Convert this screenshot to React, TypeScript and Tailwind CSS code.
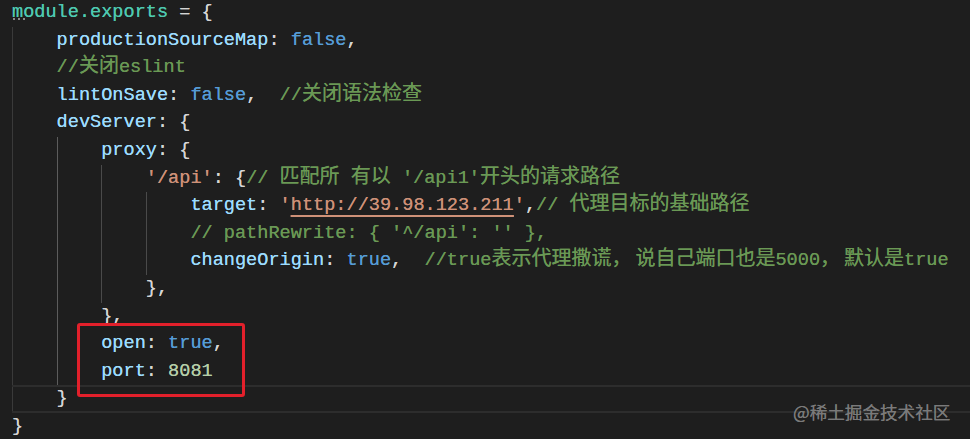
import React from "react";

type Tok = [string, string] | [string, string, string];

const P = "text-[#d4d4d4]";
const PR = "text-[#9cdcfe]";
const KW = "text-[#569cd6]";
const CM = "text-[#6a9955]";
const ST = "text-[#ce9178]";
const NU = "text-[#b5cea8]";
const TE = "text-[#4ec9b0]";

const lines: { level: number; toks: Tok[]; active?: boolean }[] = [
  { level: 0, toks: [["module.exports", TE], [" = {", P]] },
  { level: 1, toks: [["productionSourceMap", PR], [": ", P], ["false", KW], [",", P]] },
  { level: 1, toks: [["//关闭eslint", CM]] },
  { level: 1, toks: [["lintOnSave", PR], [": ", P], ["false", KW], [",  ", P], ["//关闭语法检查", CM]] },
  { level: 1, toks: [["devServer", PR], [": {", P]] },
  { level: 2, toks: [["proxy", PR], [": {", P]] },
  { level: 3, toks: [["'/api'", ST], [": {", P], ["// 匹配所 有以 '/api1'开头的请求路径", CM]] },
  {
    level: 4,
    toks: [
      ["target", PR],
      [": ", P],
      ["'", ST],
      ["http://39.98.123.211", ST, "underline decoration-2 decoration-[#ce9178] underline-offset-[5px]"],
      ["'", ST],
      [",", P],
      ["// 代理目标的基础路径", CM],
    ],
  },
  { level: 4, toks: [["// pathRewrite: { '^/api': '' },", CM]] },
  {
    level: 4,
    toks: [
      ["changeOrigin", PR],
      [": ", P],
      ["true", KW],
      [",  ", P],
      ["//true表示代理撒谎，说自己端口也是5000，默认是true", CM],
    ],
  },
  { level: 3, toks: [["},", P]] },
  { level: 2, toks: [["},", P]] },
  { level: 2, toks: [["open", PR], [": ", P], ["true", KW], [",", P]] },
  { level: 2, toks: [["port", PR], [": ", P], ["8081", NU]] },
  { level: 1, toks: [["}", P]], active: true },
  { level: 0, toks: [["}", P]] },
];

function renderCjk(s: string, key: number) {
  const bits = s.split(/(，)/);
  return (
    <span key={key} className="text-[20px] leading-[20px] font-['Noto_Sans_CJK_SC',sans-serif]">
      {bits.map((b, j) =>
        b === "，" ? (
          <span key={j} className="pr-[4px]">
            {b}
          </span>
        ) : (
          <React.Fragment key={j}>{b}</React.Fragment>
        )
      )}
    </span>
  );
}

function renderText(t: string) {
  const parts = t.split(/([\u3000-\u303f\u4e00-\u9fff\uff00-\uffef]+)/);
  return parts.map((s, i) =>
    i % 2 === 1 ? renderCjk(s, i) : <React.Fragment key={i}>{s}</React.Fragment>
  );
}

export default function App() {
  return (
    <div className="relative w-[970px] h-[439px] overflow-hidden bg-[#1e1e1e] font-['Liberation_Mono','Noto_Sans_CJK_SC',monospace] text-[18.58px] [text-shadow:0_0_0.4px_currentColor]">
      <div className="flex flex-col pl-[12px] -mt-px">
        {lines.map((ln, idx) => (
          <div
            key={idx}
            className={
              "flex h-[27.6px] shrink-0 " +
              (ln.active ? "border-y-2 border-[#2d2d2d]" : "")
            }
          >
            {Array.from({ length: ln.level }).map((_, k) => (
              <span
                key={k}
                className={
                  "w-[44.6px] shrink-0 border-l " +
                  (k === 0 ? "border-[#3a3a3a]" : k === 1 ? "border-[#5c5c5c]" : "border-[#4a4a4a]")
                }
              />
            ))}
            <span className={"whitespace-pre leading-[27.6px] " + (ln.active ? "-mt-[2px]" : "")}>
              {ln.toks.map((t, i) => (
                <span key={i} className={t[1] + (t[2] ? " " + t[2] : "")}>
                  {renderText(t[0])}
                </span>
              ))}
            </span>
          </div>
        ))}
      </div>

      {/* suggestion dots */}
      <div className="absolute left-[13px] top-[18px] flex gap-[3px]">
        <span className="w-[2px] h-[2px] bg-[#8a8a8a]" />
        <span className="w-[2px] h-[2px] bg-[#8a8a8a]" />
        <span className="w-[2px] h-[2px] bg-[#8a8a8a]" />
      </div>

      {/* red highlight box */}
      <div className="absolute left-[77px] top-[323px] w-[168px] h-[74px] border-[3px] border-[#e3202b] rounded-[3px]" />

      {/* watermark */}
      <div className="absolute left-[793px] top-[400px] text-[17.6px] leading-[24px] text-[#7a7a7a] font-['Noto_Sans_CJK_SC',sans-serif]">
        @稀土掘金技术社区
      </div>
    </div>
  );
}
